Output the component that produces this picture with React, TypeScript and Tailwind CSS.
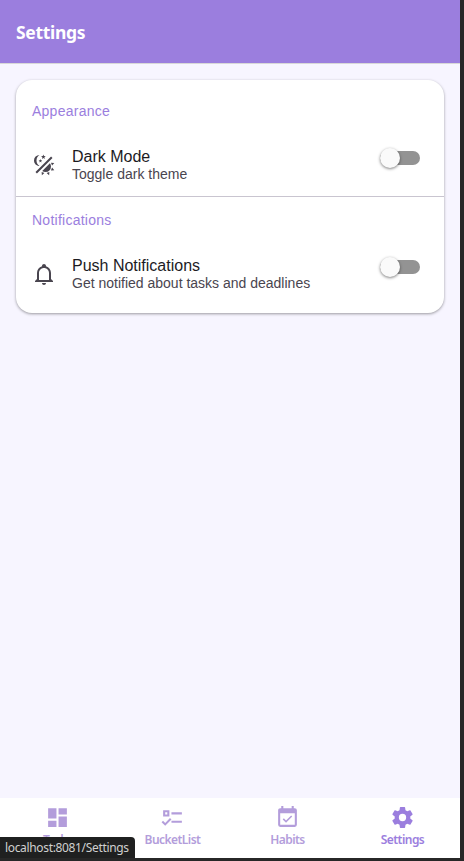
import type { ReactNode } from "react";

const paths = {
  theme:
    "M7.5,2C5.71,3.15 4.5,5.18 4.5,7.5C4.5,9.82 5.71,11.85 7.53,13C4.46,13 2,10.54 2,7.5A5.5,5.5 0 0,1 7.5,2M19.07,3.5L20.5,4.93L4.93,20.5L3.5,19.07L19.07,3.5M12.89,5.93L11.41,5L9.97,6L10.39,4.3L9,3.24L10.75,3.12L11.33,1.47L12,3.1L13.73,3.13L12.38,4.26L12.89,5.93M9.59,9.54L8.43,8.81L7.31,9.59L7.65,8.27L6.56,7.44L7.92,7.35L8.37,6.06L8.88,7.33L10.24,7.36L9.19,8.23L9.59,9.54M19,13.5A5.5,5.5 0 0,1 13.5,19C12.28,19 11.15,18.6 10.24,17.93L17.93,10.24C18.6,11.15 19,12.28 19,13.5M14.6,20.08L17.37,18.93L17.13,22.28L14.6,20.08M18.93,17.38L20.08,14.61L22.28,17.15L18.93,17.38M20.08,12.42L18.94,9.64L22.28,9.88L20.08,12.42M9.63,18.93L12.4,20.08L9.87,22.27L9.63,18.93Z",
  bell:
    "M10 21H14C14 22.1 13.1 23 12 23S10 22.1 10 21M21 19V20H3V19L5 17V11C5 7.9 7.03 5.17 10 4.29C10 4.19 10 4.1 10 4C10 2.9 10.9 2 12 2S14 2.9 14 4C14 4.1 14 4.19 14 4.29C16.97 5.17 19 7.9 19 11V17L21 19M17 11C17 8.24 14.76 6 12 6S7 8.24 7 11V18H17V11Z",
  dashboard: "M13,3V9H21V3M13,21H21V11H13M3,21H11V15H3M3,13H11V3H3V13Z",
  list:
    "M3,5H9V11H3V5M5,7V9H7V7H5M11,7H21V9H11V7M11,15H21V17H11V15M5,20L1.5,16.5L2.91,15.09L5,17.17L9.59,12.59L11,14L5,20Z",
  calendar:
    "M19,19H5V8H19M19,3H18V1H16V3H8V1H6V3H5C3.89,3 3,3.9 3,5V19A2,2 0 0,0 5,21H19A2,2 0 0,0 21,19V5A2,2 0 0,0 19,3M16.53,11.06L15.47,10L10.59,14.88L8.47,12.76L7.41,13.82L10.59,17L16.53,11.06Z",
  cog:
    "M12,15.5A3.5,3.5 0 0,1 8.5,12A3.5,3.5 0 0,1 12,8.5A3.5,3.5 0 0,1 15.5,12A3.5,3.5 0 0,1 12,15.5M19.43,12.97C19.47,12.65 19.5,12.33 19.5,12C19.5,11.67 19.47,11.34 19.43,11L21.54,9.37C21.73,9.22 21.78,8.95 21.66,8.73L19.66,5.27C19.54,5.05 19.27,4.96 19.05,5.05L16.56,6.05C16.04,5.66 15.5,5.32 14.87,5.07L14.5,2.42C14.46,2.18 14.25,2 14,2H10C9.75,2 9.54,2.18 9.5,2.42L9.13,5.07C8.5,5.32 7.96,5.66 7.44,6.05L4.95,5.05C4.73,4.96 4.46,5.05 4.34,5.27L2.34,8.73C2.21,8.95 2.27,9.22 2.46,9.37L4.57,11C4.53,11.34 4.5,11.67 4.5,12C4.5,12.33 4.53,12.65 4.57,12.97L2.46,14.63C2.27,14.78 2.21,15.05 2.34,15.27L4.34,18.73C4.46,18.95 4.73,19.03 4.95,18.95L7.44,17.94C7.96,18.34 8.5,18.68 9.13,18.93L9.5,21.58C9.54,21.82 9.75,22 10,22H14C14.25,22 14.46,21.82 14.5,21.58L14.87,18.93C15.5,18.67 16.04,18.34 16.56,17.94L19.05,18.95C19.27,19.03 19.54,18.95 19.66,18.73L21.66,15.27C21.78,15.05 21.73,14.78 21.54,14.63L19.43,12.97Z",
};

function Icon({ name, className }: { name: keyof typeof paths; className: string }) {
  return (
    <svg viewBox="0 0 24 24" fill="currentColor" className={className} aria-hidden="true">
      <path d={paths[name]} />
    </svg>
  );
}

function Toggle() {
  return (
    <button role="switch" aria-checked="false" className="mt-px flex h-5 w-10 items-center">
      <span className="flex h-3.5 w-10 items-center rounded-full bg-[#939393]">
        <span className="size-5 shrink-0 rounded-full bg-[#fafafa] shadow-[0_1px_3px_rgba(0,0,0,0.5)]" />
      </span>
    </button>
  );
}

function Section({ title, children }: { title: string; children: ReactNode }) {
  return (
    <section className="h-[108px] px-4 pt-[13px]">
      <h2 className="text-sm leading-5 tracking-[0.25px] text-[#9b7ede]">{title}</h2>
      {children}
    </section>
  );
}

function Row({ icon, title, text }: { icon: keyof typeof paths; title: string; text: string }) {
  return (
    <div className="flex items-start pt-[26px] pr-2">
      <Icon name={icon} className="mt-1.5 size-6 text-[#49454f]" />
      <div className="ml-4 flex-1">
        <div className="text-base leading-[19px] text-[#1c1b1f]">{title}</div>
        <div className="text-sm leading-4 text-[#49454f]">{text}</div>
      </div>
      <Toggle />
    </div>
  );
}

function Tab({ icon, label, active = false }: { icon: keyof typeof paths; label: string; active?: boolean }) {
  return (
    <a className={active ? "flex flex-1 flex-col items-center text-[#9b7ede]" : "flex flex-1 flex-col items-center text-[#b39ddb]"}>
      <Icon name={icon} className="mt-[7px] size-[25px]" />
      <span className="mt-px text-[12px] leading-[18px] font-semibold tracking-[-0.55px]">{label}</span>
    </a>
  );
}

export default function App() {
  return (
    <div className="relative h-[861px] w-[464px] overflow-hidden bg-[#272727] pr-1 pb-[3px] font-['Liberation_Sans',Arial,sans-serif]">
      <div className="flex h-full flex-col bg-[#f7f5ff]">
        <header className="flex h-16 items-center border-b border-[#d8d8d8] bg-[#9b7ede] px-4 pt-px font-['Noto_Sans',sans-serif]">
          <h1 className="text-[17.5px] font-bold tracking-[-0.3px] text-white">Settings</h1>
        </header>
        <main className="flex-1 p-4">
          <div className="h-[233px] rounded-2xl bg-white pt-[8px] shadow-[0_1px_3px_rgba(0,0,0,0.38)]">
            <Section title="Appearance">
              <Row icon="theme" title="Dark Mode" text="Toggle dark theme" />
            </Section>
            <div className="h-px bg-[#c9c5d0]" />
            <Section title="Notifications">
              <Row icon="bell" title="Push Notifications" text="Get notified about tasks and deadlines" />
            </Section>
          </div>
        </main>
        <nav className="flex h-[60px] bg-white font-['Noto_Sans',sans-serif]">
          <Tab icon="dashboard" label="Tasks" />
          <Tab icon="list" label="BucketList" />
          <Tab icon="calendar" label="Habits" />
          <Tab icon="cog" label="Settings" active />
        </nav>
      </div>
      <div className="absolute bottom-[3px] left-0 h-[21px] w-[135px] rounded-tr bg-[#1f2020] pl-[5px] font-['Noto_Sans',sans-serif] text-[12px] leading-[22px] tracking-[-0.34px] whitespace-nowrap text-[#d0d0d0]">
        localhost:8081/Settings
      </div>
    </div>
  );
}
